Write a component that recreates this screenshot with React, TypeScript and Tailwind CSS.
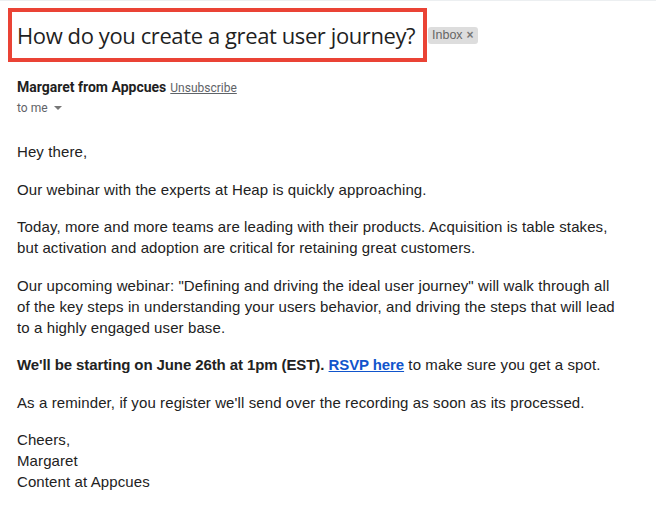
export default function App() {
  return (
    <div className="w-[656px] h-[526px] bg-white border-t border-[#eceff1] overflow-hidden">
      <div className="flex items-center pl-[8px] pt-[7px]">
        <div className="border-4 border-[#ea4335] h-[54px] w-[419px] flex items-center pl-[5px]">
          <h1 className="text-[22px] text-[#1f1f1f] font-['Open_Sans',sans-serif] tracking-[-0.4px] whitespace-nowrap">
            How do you create a great user journey?
          </h1>
        </div>
        <span className="ml-[1px] mt-[1px] h-[17px] px-[4px] rounded-[3px] bg-[#dddddd] text-[#666] text-[12.5px] leading-[17px] font-['Liberation_Sans',sans-serif] flex items-center gap-[4px]">
          Inbox
          <span className="text-[12px] font-bold text-[#777]">×</span>
        </span>
      </div>

      <div className="pl-[17px] pt-[15px] font-['Roboto',sans-serif]">
        <div className="flex items-baseline gap-[4px]">
          <span className="text-[14px] font-bold text-[#1f1f1f]">Margaret from Appcues</span>
          <span className="text-[12px] text-[#5f6368] underline">Unsubscribe</span>
        </div>
        <div className="flex items-center gap-[6px] text-[12px] text-[#5f6368] mt-[1px]">
          to me
          <svg width="8" height="4" viewBox="0 0 8 4">
            <path d="M0 0h8L4 4z" fill="#777" />
          </svg>
        </div>
      </div>

      <div className="pl-[17px] pt-[24px] text-[15px] leading-[21px] tracking-[0.1px] text-[#222] font-['Liberation_Sans',sans-serif] flex flex-col gap-[16.5px] whitespace-nowrap">
        <p>Hey there,</p>
        <p>Our webinar with the experts at Heap is quickly approaching.</p>
        <p>
          Today, more and more teams are leading with their products. Acquisition is table stakes,
          <br />
          but activation and adoption are critical for retaining great customers.
        </p>
        <p>
          Our upcoming webinar: "Defining and driving the ideal user journey" will walk through all
          <br />
          of the key steps in understanding your users behavior, and driving the steps that will lead
          <br />
          to a highly engaged user base.
        </p>
        <p>
          <b className="tracking-[-0.1px]">We'll be starting on June 26th at 1pm (EST).</b>{" "}
          <a className="text-[#1155cc] font-bold underline tracking-[-0.1px]">RSVP here</a> to make sure you get a spot.
        </p>
        <p>As a reminder, if you register we'll send over the recording as soon as its processed.</p>
        <p>
          Cheers,
          <br />
          Margaret
          <br />
          Content at Appcues
        </p>
      </div>
    </div>
  );
}
